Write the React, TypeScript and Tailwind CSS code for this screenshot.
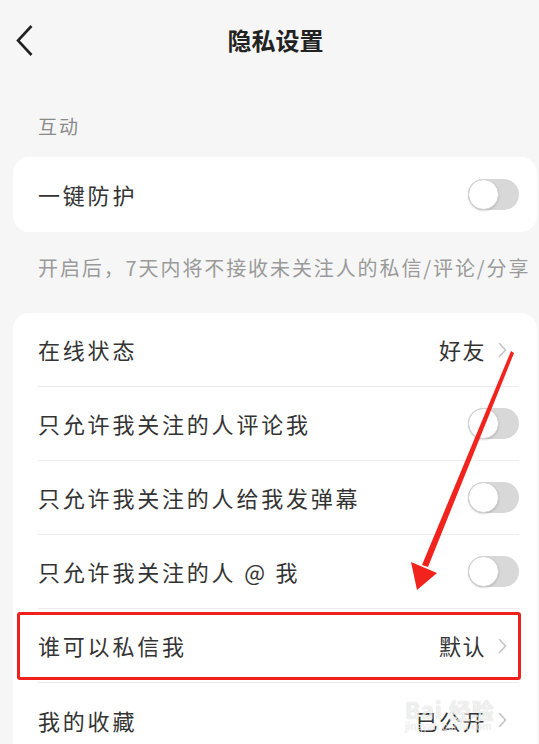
import React from 'react'

const font = { fontFamily: '"Noto Sans CJK SC", "Noto Sans", sans-serif' }

const Toggle = () => (
  <div className="relative h-[31px] w-[51px] rounded-full bg-[#d8d8d8]">
    <div className="absolute left-0 top-0 h-[31px] w-[31px] rounded-full border border-[#cfcfcf] bg-white shadow-[0_1px_2px_rgba(0,0,0,0.15)]" />
  </div>
)

const Chevron = () => (
  <svg width="9" height="16" viewBox="0 0 9 16" className="ml-[12px]">
    <path d="M1.5 1.5 L7.5 8 L1.5 14.5" fill="none" stroke="#c4c4c4" strokeWidth="1.6" strokeLinecap="round" strokeLinejoin="round" />
  </svg>
)

interface RowProps {
  label: string
  value?: string
  toggle?: boolean
  last?: boolean
  highlight?: boolean
}

const Row = ({ label, value, toggle, last, highlight }: RowProps) => (
  <div className="relative">
    <div className={`flex h-[74px] items-center justify-between ${last ? '' : 'border-b border-[#ececec]'}`}>
      <span className="text-[22px] tracking-[2.8px] text-[#333]">{label}</span>
      {toggle ? (
        <Toggle />
      ) : (
        <div className="flex items-center pr-[12px]">
          <span className="text-[22px] tracking-[1.5px] text-[#333]">{value}</span>
          <Chevron />
        </div>
      )}
    </div>
    {highlight && (
      <div className="absolute bottom-[3px] left-[-21px] right-[-2px] top-[3px] rounded-[3px] border-[3px] border-[#f0201c]" />
    )}
  </div>
)

export default function App() {
  return (
    <div className="relative h-[744px] w-[539px] overflow-hidden bg-[#f6f6f6]" style={font}>
      {/* header */}
      <div className="grid h-[80px] grid-cols-[1fr_auto_1fr] items-center">
        <div className="pl-[16px]">
          <svg width="18" height="32" viewBox="0 0 18 32">
            <path d="M15.5 2 L2 16.5 L15.5 31" fill="none" stroke="#222" strokeWidth="2.6" strokeLinejoin="miter" />
          </svg>
        </div>
        <div className="pl-[12px] text-[24px] font-bold text-[#222]">隐私设置</div>
        <div />
      </div>

      <div className="mt-[34px] pl-[38px] text-[19px] leading-[24px] tracking-[2px] text-[#8a8a8a]">互动</div>

      <div className="ml-[13px] mr-[2px] mt-[19px] flex h-[75px] items-center justify-between rounded-[16px] bg-white pl-[25px] pr-[18px]">
        <span className="text-[22px] tracking-[2.8px] text-[#333]">一键防护</span>
        <Toggle />
      </div>

      <div className="mt-[23px] whitespace-nowrap pl-[38px] text-[20px] leading-[26px] tracking-[1.9px] text-[#9a9a9a]">
        开启后，7天内将不接收未关注人的私信/评论/分享
      </div>

      <div className="ml-[13px] mr-[2px] mt-[32px] rounded-[16px] bg-white pl-[25px] pr-[18px]">
        <Row label="在线状态" value="好友" />
        <Row label="只允许我关注的人评论我" toggle />
        <Row label="只允许我关注的人给我发弹幕" toggle />
        <Row label="只允许我关注的人 @ 我" toggle />
        <Row label="谁可以私信我" value="默认" highlight />
        <Row label="我的收藏" value="已公开" last />
      </div>

      {/* red annotation arrow */}
      <svg className="pointer-events-none absolute left-0 top-0" width="539" height="744" viewBox="0 0 539 744">
        <polygon points="511,351 514,353 428,567 422,565" fill="#f2231d" />
        <polygon points="411,562 437,573 417,590" fill="#f2231d" />
      </svg>

      {/* watermark */}
      <div className="pointer-events-none absolute left-[405px] top-[698px] flex flex-col items-start text-white/75">
        <span className="text-[22px] font-bold leading-[22px] tracking-[1px] [text-shadow:0_0_1px_rgba(0,0,0,0.25)]">Bai 经验</span>
        <span className="text-[10px] leading-[12px] [text-shadow:0_0_1px_rgba(0,0,0,0.2)]">jingyan.baidu.com</span>
      </div>
    </div>
  )
}
